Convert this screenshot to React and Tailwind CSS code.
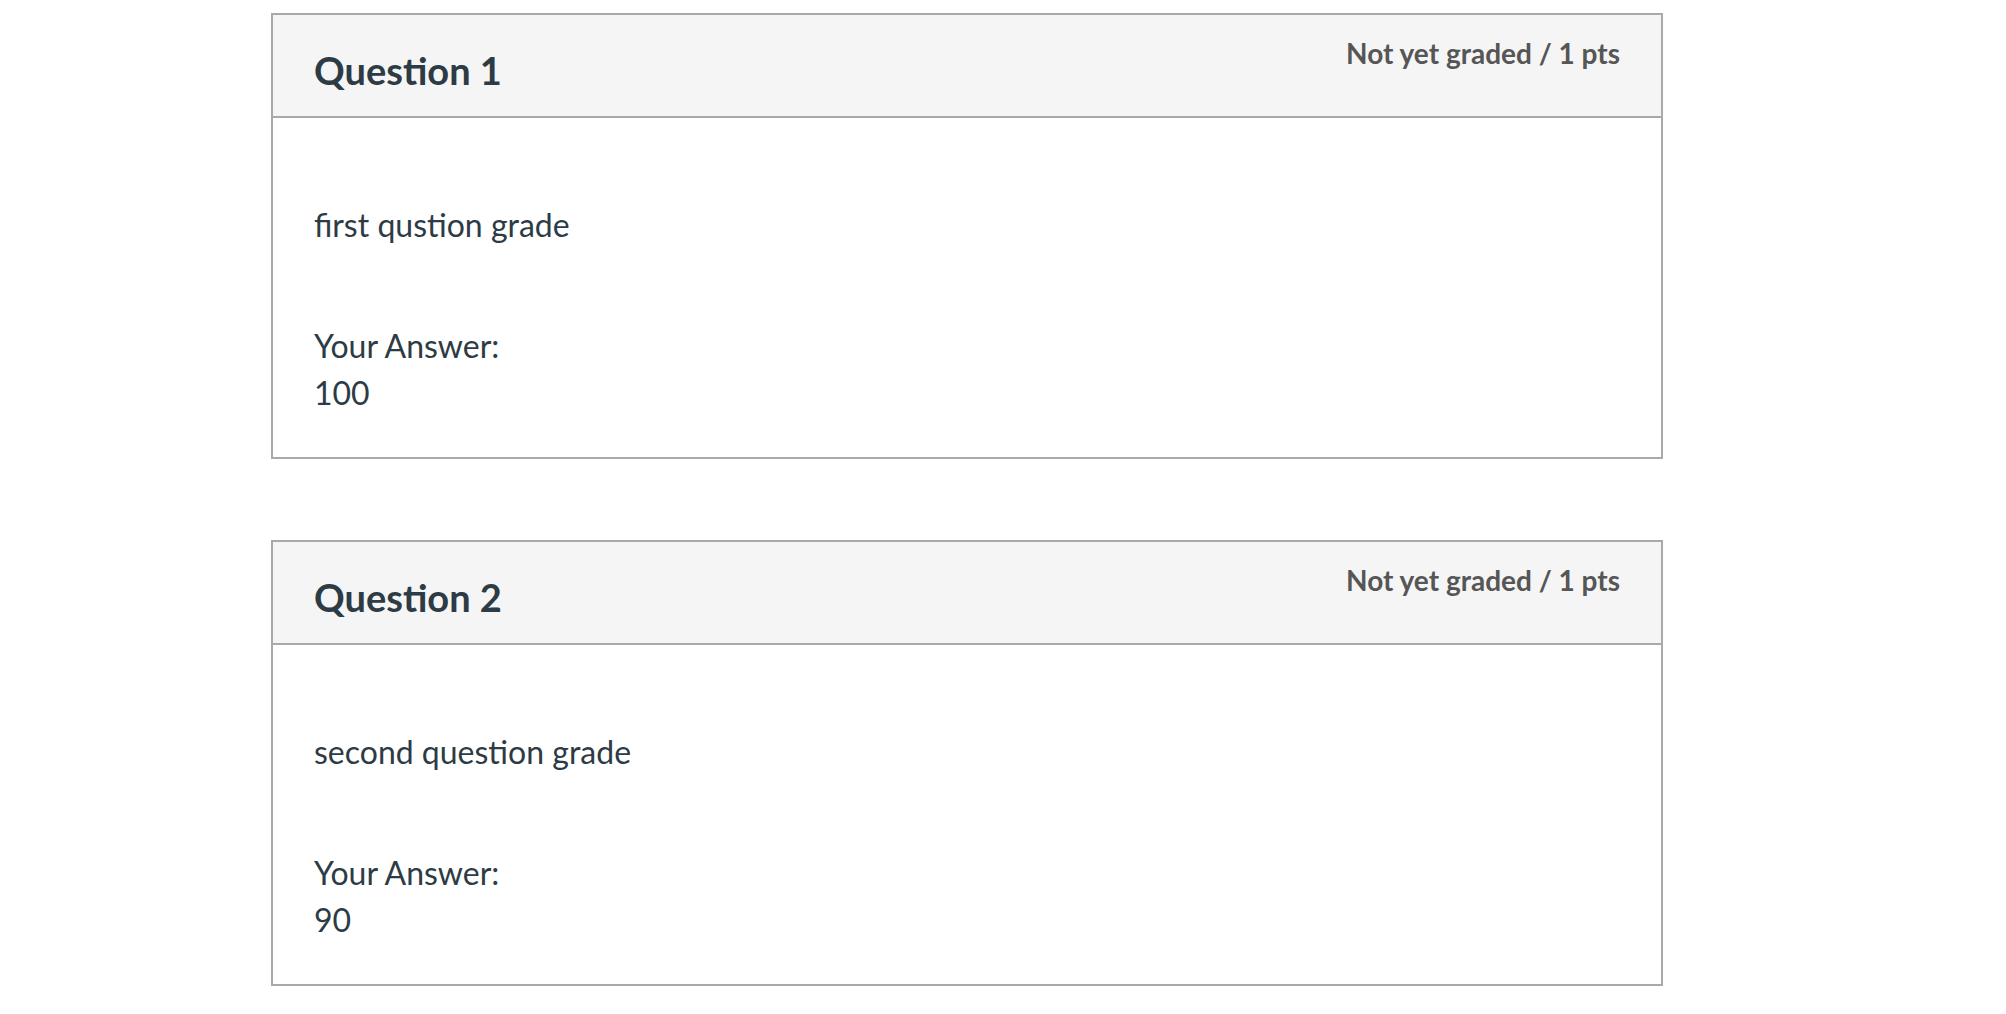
import React from 'react';

const questions = [
  { id: 1, title: 'Question 1', text: 'first qustion grade', answer: '100' },
  { id: 2, title: 'Question 2', text: 'second question grade', answer: '90' },
];

const QuestionCard = ({ q }) => (
  <div className="border-2 border-[#a9a9a9] bg-white">
    <div className="flex justify-between items-start h-[103px] px-[41px] bg-[#f5f5f5] border-b-2 border-[#a9a9a9]">
      <h2 className="mt-[30px] text-[38px] leading-[50px] font-bold text-[#2d3b45]">{q.title}</h2>
      <div className="mt-[17px] text-[28px] leading-[42px] font-bold text-[#565656]">
        Not yet graded / 1 pts
      </div>
    </div>
    <div className="px-[41px] pt-[83px] pb-[41px] text-[32px] leading-[48px] text-[#2d3b45]">
      <p>{q.text}</p>
      <div className="mt-[73px]">
        <div>Your Answer:</div>
        <div className="leading-[46px]">{q.answer}</div>
      </div>
    </div>
  </div>
);

const App = () => {
  return (
    <div className="min-h-screen bg-white pt-[13px] font-['Lato',sans-serif]">
      <div className="ml-[271px] w-[1392px] flex flex-col gap-[81px]">
        {questions.map((q) => (
          <QuestionCard key={q.id} q={q} />
        ))}
      </div>
    </div>
  );
};

export default App;
